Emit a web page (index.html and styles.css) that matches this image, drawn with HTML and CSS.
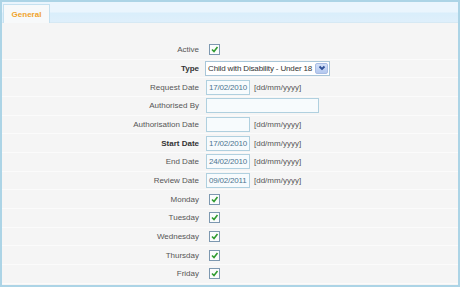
FILE: index.html
```html
<!DOCTYPE html>
<html lang="en">
<head>
    <meta charset="UTF-8">
    <title>General</title>
    <link rel="stylesheet" href="styles.css">
</head>
<body>
    <div class="panel">
        <div class="tabs">
            <div class="tab">General</div>
        </div>
        <div class="content">
            <div class="row">
                <label>Active</label>
                <span class="check"><svg viewBox="0 0 9 9" width="9" height="9"><polyline points="2,4.5 4,6.5 7.5,2" fill="none" stroke="#2f9b2f" stroke-width="1.6"/></svg></span>
            </div>
            <div class="row">
                <label class="bold">Type</label>
                <div class="select">
                    <span class="select-text">Child with Disability - Under 18</span>
                    <span class="arrow"><svg viewBox="0 0 10 8" width="10" height="8"><polyline points="2.5,2.5 5,5 7.5,2.5" fill="none" stroke="#2d4f96" stroke-width="1.8"/></svg></span>
                </div>
            </div>
            <div class="row">
                <label>Request Date</label>
                <div class="field"><span class="date">17/02/2010</span><span class="hint">[dd/mm/yyyy]</span></div>
            </div>
            <div class="row">
                <label>Authorised By</label>
                <span class="text-box"></span>
            </div>
            <div class="row">
                <label>Authorisation Date</label>
                <div class="field"><span class="date"></span><span class="hint">[dd/mm/yyyy]</span></div>
            </div>
            <div class="row">
                <label class="bold">Start Date</label>
                <div class="field"><span class="date">17/02/2010</span><span class="hint">[dd/mm/yyyy]</span></div>
            </div>
            <div class="row">
                <label>End Date</label>
                <div class="field"><span class="date">24/02/2010</span><span class="hint">[dd/mm/yyyy]</span></div>
            </div>
            <div class="row">
                <label>Review Date</label>
                <div class="field"><span class="date">09/02/2011</span><span class="hint">[dd/mm/yyyy]</span></div>
            </div>
            <div class="row">
                <label>Monday</label>
                <span class="check"><svg viewBox="0 0 9 9" width="9" height="9"><polyline points="2,4.5 4,6.5 7.5,2" fill="none" stroke="#2f9b2f" stroke-width="1.6"/></svg></span>
            </div>
            <div class="row">
                <label>Tuesday</label>
                <span class="check"><svg viewBox="0 0 9 9" width="9" height="9"><polyline points="2,4.5 4,6.5 7.5,2" fill="none" stroke="#2f9b2f" stroke-width="1.6"/></svg></span>
            </div>
            <div class="row">
                <label>Wednesday</label>
                <span class="check"><svg viewBox="0 0 9 9" width="9" height="9"><polyline points="2,4.5 4,6.5 7.5,2" fill="none" stroke="#2f9b2f" stroke-width="1.6"/></svg></span>
            </div>
            <div class="row">
                <label>Thursday</label>
                <span class="check"><svg viewBox="0 0 9 9" width="9" height="9"><polyline points="2,4.5 4,6.5 7.5,2" fill="none" stroke="#2f9b2f" stroke-width="1.6"/></svg></span>
            </div>
            <div class="row">
                <label>Friday</label>
                <span class="check"><svg viewBox="0 0 9 9" width="9" height="9"><polyline points="2,4.5 4,6.5 7.5,2" fill="none" stroke="#2f9b2f" stroke-width="1.6"/></svg></span>
            </div>
        </div>
    </div>
</body>
</html>
```
FILE: styles.css
```css
body {
    margin: 0;
    font-family: "Liberation Sans", Arial, sans-serif;
    font-size: 8px;
    color: #444;
}
.panel {
    width: 456px;
    height: 283px;
    border: 2px solid #acd4e6;
    background: #f5f5f5;
    display: flex;
    flex-direction: column;
}
.tabs {
    height: 20px;
    background: linear-gradient(#eaf5fd 0, #eaf5fd 10px, #d9eefb 11px, #deeffb 19px);
    border-bottom: 1px solid #d6e9f4;
    display: flex;
    align-items: flex-end;
    padding-left: 1px;
}
.tab {
    width: 47px;
    height: 19px;
    box-sizing: border-box;
    border: 1px solid #c5e1f0;
    border-bottom: none;
    background: #f7f9fa;
    color: #f0a32c;
    font-weight: bold;
    text-align: center;
    line-height: 19px;
    margin-bottom: -1px;
}
.content {
    padding-top: 18px;
}
.row {
    display: grid;
    grid-template-columns: 197px auto;
    column-gap: 7px;
    align-items: center;
    height: 18.67px;
    border-bottom: 1px solid #fbfbfb;
    box-sizing: border-box;
}
.row label {
    text-align: right;
    color: #555;
}
.row label.bold {
    font-weight: bold;
    color: #333;
}
.check {
    width: 11px;
    height: 11px;
    box-sizing: border-box;
    margin-left: 3px;
    border: 1px solid #7d98b0;
    background: #fbfcfd;
    display: flex;
}
.select {
    width: 125px;
    height: 15px;
    box-sizing: border-box;
    border: 1px solid #a9c6d8;
    background: #fff;
    display: flex;
    align-items: center;
    justify-content: space-between;
    padding-left: 2px;
    padding-right: 1px;
    color: #333;
    margin-left: -1px;
}
.select-text {
    white-space: nowrap;
    letter-spacing: -0.15px;
}
.arrow {
    width: 13px;
    height: 11px;
    box-sizing: border-box;
    background: linear-gradient(#d3e0f7, #b4c8ef);
    border: 1px solid #a9bde4;
    border-radius: 2px;
    display: flex;
    align-items: center;
    justify-content: center;
}
.field {
    display: flex;
    align-items: center;
    gap: 4px;
}
.date {
    width: 44px;
    height: 15px;
    box-sizing: border-box;
    border: 1px solid #b0d0df;
    background: #f7fbfd;
    color: #4d7590;
    padding-left: 2px;
    line-height: 13px;
    white-space: nowrap;
    letter-spacing: -0.2px;
}
.hint {
    color: #555;
}
.text-box {
    width: 113px;
    height: 15px;
    box-sizing: border-box;
    border: 1px solid #b0d0df;
    background: #f7fbfd;
}
```
